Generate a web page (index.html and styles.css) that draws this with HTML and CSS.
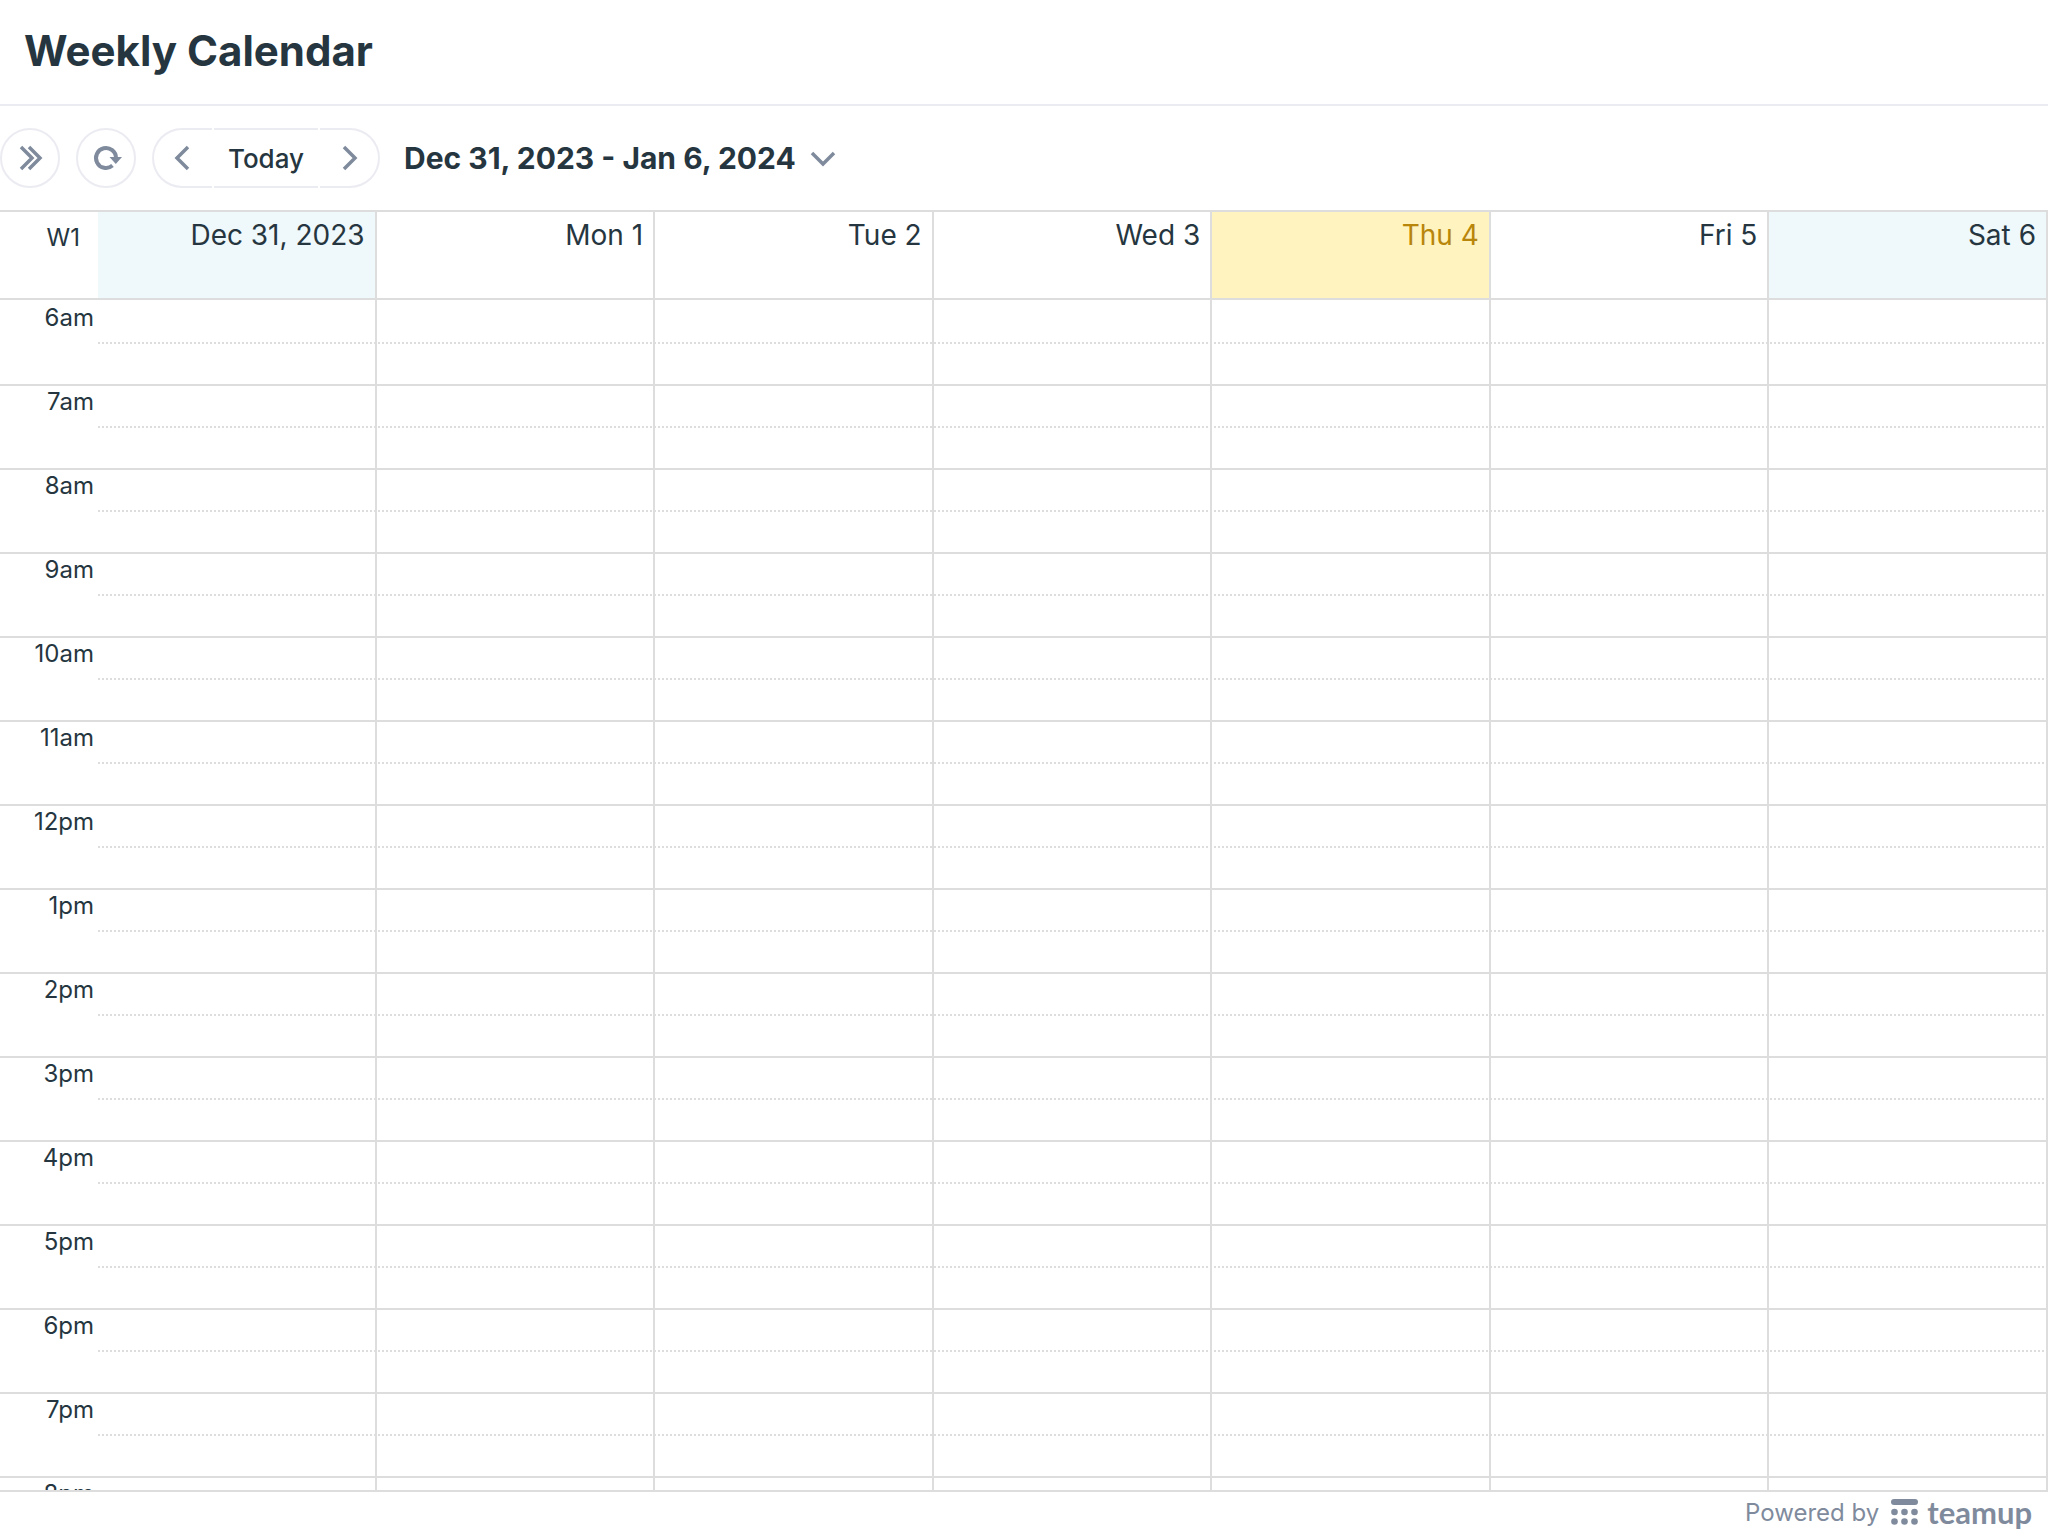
FILE: index.html
```html
<!DOCTYPE html>
<html lang="en">
<head>
<meta charset="utf-8">
<title>Weekly Calendar</title>
<meta name="viewport" content="width=device-width, initial-scale=1">
<link rel="stylesheet" href="styles.css">
</head>
<body>
<header class="page-header"><h1 class="page-title">Weekly Calendar</h1></header>
<nav class="toolbar" aria-label="Calendar navigation">
  <button class="round-button" type="button" aria-label="Expand sidebar">
    <svg class="icon" viewBox="0 0 32 32" aria-hidden="true"><path d="M7 5l11 11L7 27M15 5l11 11-11 11"/></svg>
  </button>
  <button class="round-button" type="button" aria-label="Refresh">
    <svg class="icon" viewBox="0 0 32 32" aria-hidden="true"><path class="arc" d="M22.500 23.600A10 10 0 1 1 26 16"/><path class="solid" d="M19.500 15H32l-6.200 7z"/></svg>
  </button>
  <div class="pager">
    <button class="pager-button pager-prev" type="button" aria-label="Previous week">
      <svg class="icon" viewBox="0 0 32 32" aria-hidden="true"><path d="M21 5L10 16l11 11"/></svg>
    </button>
    <button class="pager-button pager-today" type="button">Today</button>
    <button class="pager-button pager-next" type="button" aria-label="Next week">
      <svg class="icon" viewBox="0 0 32 32" aria-hidden="true"><path d="M11 5l11 11-11 11"/></svg>
    </button>
  </div>
  <button class="range-button" type="button">Dec 31, 2023 - Jan 6, 2024
    <svg class="icon" viewBox="0 0 32 32" aria-hidden="true"><path d="M4 11l11 11 11-11"/></svg>
  </button>
</nav>
<main class="calendar">
  <table class="week">
    <colgroup><col class="time-col"><col span="7"></colgroup>
    <thead>
      <tr><th class="week-number" scope="col">W1</th><th class="day weekend" scope="col">Dec 31, 2023</th><th class="day" scope="col">Mon 1</th><th class="day" scope="col">Tue 2</th><th class="day" scope="col">Wed 3</th><th class="day today" scope="col">Thu 4</th><th class="day" scope="col">Fri 5</th><th class="day weekend" scope="col">Sat 6</th></tr>
    </thead>
    <tbody>
      <tr><th scope="row">6am</th><td></td><td></td><td></td><td></td><td></td><td></td><td></td></tr>
      <tr><th scope="row">7am</th><td></td><td></td><td></td><td></td><td></td><td></td><td></td></tr>
      <tr><th scope="row">8am</th><td></td><td></td><td></td><td></td><td></td><td></td><td></td></tr>
      <tr><th scope="row">9am</th><td></td><td></td><td></td><td></td><td></td><td></td><td></td></tr>
      <tr><th scope="row">10am</th><td></td><td></td><td></td><td></td><td></td><td></td><td></td></tr>
      <tr><th scope="row">11am</th><td></td><td></td><td></td><td></td><td></td><td></td><td></td></tr>
      <tr><th scope="row">12pm</th><td></td><td></td><td></td><td></td><td></td><td></td><td></td></tr>
      <tr><th scope="row">1pm</th><td></td><td></td><td></td><td></td><td></td><td></td><td></td></tr>
      <tr><th scope="row">2pm</th><td></td><td></td><td></td><td></td><td></td><td></td><td></td></tr>
      <tr><th scope="row">3pm</th><td></td><td></td><td></td><td></td><td></td><td></td><td></td></tr>
      <tr><th scope="row">4pm</th><td></td><td></td><td></td><td></td><td></td><td></td><td></td></tr>
      <tr><th scope="row">5pm</th><td></td><td></td><td></td><td></td><td></td><td></td><td></td></tr>
      <tr><th scope="row">6pm</th><td></td><td></td><td></td><td></td><td></td><td></td><td></td></tr>
      <tr><th scope="row">7pm</th><td></td><td></td><td></td><td></td><td></td><td></td><td></td></tr>
      <tr><th scope="row">8pm</th><td></td><td></td><td></td><td></td><td></td><td></td><td></td></tr>
    </tbody>
  </table>
</main>
<footer class="page-footer">
  <span>Powered by</span>
  <a class="brand" href="#">
    <svg class="brand-mark" viewBox="0 0 28 26" aria-hidden="true"><rect x="0" y="0" width="27" height="6" rx="3"/><circle cx="3.500" cy="13" r="3.300"/><circle cx="13.500" cy="13" r="3.300"/><circle cx="23.500" cy="13" r="3.300"/><circle cx="3.500" cy="22.500" r="3.300"/><circle cx="13.500" cy="22.500" r="3.300"/><circle cx="23.500" cy="22.500" r="3.300"/></svg>
    <span class="brand-name">teamup</span>
  </a>
</footer>
</body>
</html>
```
FILE: styles.css
```css
:root {
  --ink: #263640;
  --muted: #7f8b9d;
  --line: #dddddd;
  --soft-line: #ebebf2;
}

* { box-sizing: border-box; }

body {
  margin: 0;
  height: 100vh;
  display: flex;
  flex-direction: column;
  background: #fff;
  color: var(--ink);
  font-family: Inter, "Liberation Sans", sans-serif;
}

.page-header {
  padding: 23px 24px 25px;
  border-bottom: 2px solid var(--soft-line);
}

.page-title {
  margin: 0;
  font-size: 42px;
  line-height: 56px;
  font-weight: 700;
}

.toolbar {
  display: flex;
  align-items: center;
  gap: 16px;
  padding: 22px 0;
  border-bottom: 2px solid var(--line);
}

.toolbar button {
  display: flex;
  align-items: center;
  justify-content: center;
  height: 60px;
  padding: 0;
  background: #fff;
  border: 2px solid var(--soft-line);
  color: var(--ink);
  font-family: inherit;
}

.toolbar .round-button {
  width: 60px;
  border-radius: 50%;
}

.icon {
  width: 32px;
  height: 32px;
  flex: none;
  fill: none;
  stroke: var(--muted);
  stroke-width: 3.5;
}

.icon .arc { stroke-width: 4; }

.icon .solid {
  fill: var(--muted);
  stroke: none;
}

.pager {
  display: flex;
  gap: 2px;
}

.toolbar .pager-button { width: 60px; }

.toolbar .pager-prev {
  border-right: 0;
  border-radius: 30px 0 0 30px;
}

.toolbar .pager-today {
  width: 104px;
  border-width: 2px 0;
  font-size: 26px;
  font-weight: 500;
}

.toolbar .pager-next {
  border-left: 0;
  border-radius: 0 30px 30px 0;
}

.toolbar .range-button {
  gap: 12px;
  padding: 0 8px;
  border: 0;
  font-size: 30px;
  font-weight: 700;
}

.calendar {
  flex: 1;
  min-height: 0;
  overflow: hidden;
  border-bottom: 2px solid var(--line);
}

.week {
  width: 100%;
  table-layout: fixed;
  border-collapse: separate;
  border-spacing: 0;
}

.time-col { width: 98px; }

.week th,
.week td {
  padding: 0;
  vertical-align: top;
  text-align: right;
  font-weight: 400;
}

.week thead th {
  height: 88px;
  border-bottom: 2px solid var(--line);
}

.week .week-number {
  padding: 10px 18px;
  font-size: 24px;
  line-height: 32px;
}

.week .day {
  padding: 5px 10px;
  border-right: 2px solid var(--line);
  font-size: 28px;
  line-height: 36px;
}

.week .weekend { background: #eff8fb; }

.week .today {
  background: #fff3bf;
  color: #b8860b;
}

/* Dotted half-hour line, starting after the time column */
.week tbody tr {
  height: 84px;
  background: repeating-linear-gradient(90deg, var(--line) 0 2px, transparent 2px 4px) 98px 42px / 100% 2px no-repeat;
}

.week tbody th {
  padding: 0 4px;
  border-top: 2px solid var(--line);
  font-size: 24px;
  line-height: 32px;
}

.week tbody td {
  border-top: 2px solid var(--line);
  border-right: 2px solid var(--line);
}

/* The header already draws the line above the first hour */
.week tbody tr:first-child > * { border-top-color: transparent; }

.week tbody tr:first-child td { 
  border-top: 0;
}

.page-footer {
  display: flex;
  align-items: center;
  justify-content: flex-end;
  gap: 12px;
  height: 44px;
  padding: 0 16px 4px;
  color: var(--muted);
  font-size: 24px;
}

.brand {
  display: flex;
  align-items: center;
  gap: 8px;
  color: inherit;
  text-decoration: none;
}

.brand-mark {
  width: 28px;
  height: 26px;
  fill: currentColor;
}

.brand-name {
  font-family: Lato, sans-serif;
  font-size: 31px;
  line-height: 36px;
  font-weight: 700;
}
```
